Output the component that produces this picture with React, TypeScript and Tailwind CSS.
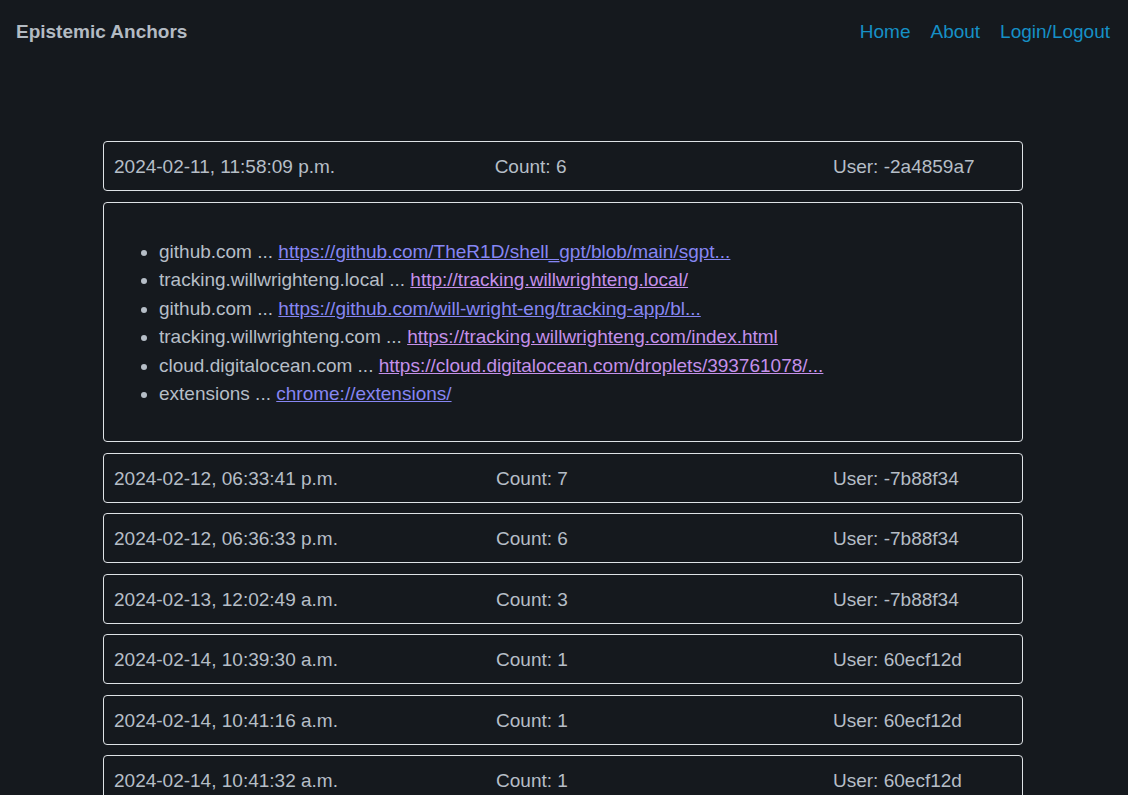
type Entry = {
  date: string;
  count: number;
  user: string;
};

type Link = {
  host: string;
  url: string;
  visited: boolean;
};

const entries: Entry[] = [
  { date: "2024-02-11, 11:58:09 p.m.", count: 6, user: "-2a4859a7" },
  { date: "2024-02-12, 06:33:41 p.m.", count: 7, user: "-7b88f34" },
  { date: "2024-02-12, 06:36:33 p.m.", count: 6, user: "-7b88f34" },
  { date: "2024-02-13, 12:02:49 a.m.", count: 3, user: "-7b88f34" },
  { date: "2024-02-14, 10:39:30 a.m.", count: 1, user: "60ecf12d" },
  { date: "2024-02-14, 10:41:16 a.m.", count: 1, user: "60ecf12d" },
  { date: "2024-02-14, 10:41:32 a.m.", count: 1, user: "60ecf12d" },
];

const links: Link[] = [
  { host: "github.com", url: "https://github.com/TheR1D/shell_gpt/blob/main/sgpt...", visited: false },
  { host: "tracking.willwrighteng.local", url: "http://tracking.willwrighteng.local/", visited: true },
  { host: "github.com", url: "https://github.com/will-wright-eng/tracking-app/bl...", visited: false },
  { host: "tracking.willwrighteng.com", url: "https://tracking.willwrighteng.com/index.html", visited: true },
  { host: "cloud.digitalocean.com", url: "https://cloud.digitalocean.com/droplets/393761078/...", visited: true },
  { host: "extensions", url: "chrome://extensions/", visited: false },
];

function Row({ entry }: { entry: Entry }) {
  return (
    <div className="flex items-center h-[50px] border border-[#dee2e6] rounded-[4px] px-[10px] pt-[3px]">
      <span>{entry.date}</span>
      <div className="flex-1 flex justify-center">
        <span>Count: {entry.count}</span>
      </div>
      <span className="w-[179px] ml-[107px]">User: {entry.user}</span>
    </div>
  );
}

function Details() {
  return (
    <div className="h-[240.5px] border border-[#dee2e6] rounded-[4px] px-[11px] pt-[35px]">
      <ul className="list-disc pl-[44px]">
        {links.map((l, i) => (
          <li key={i}>
            {l.host} ...{" "}
            <a
              href="#"
              className={`underline ${l.visited ? "text-[#c490ea]" : "text-[#8686f3]"}`}
            >
              {l.url}
            </a>
          </li>
        ))}
      </ul>
    </div>
  );
}

export default function App() {
  return (
    <div
      className="min-h-[795px] bg-[#15191e] text-[#b6bec7] text-[19px] leading-[28.5px]"
      style={{ fontFamily: '"Liberation Sans", Arial, sans-serif' }}
    >
      <nav className="flex items-center justify-between h-[62px] pt-[2px] pl-4 pr-[18px]">
        <span className="font-bold text-[#b3bbc3]">Epistemic Anchors</span>
        <div className="flex gap-[20px] text-[#1690c6]">
          <a href="#">Home</a>
          <a href="#">About</a>
          <a href="#">Login/Logout</a>
        </div>
      </nav>
      <main className="w-[920px] ml-[103px] mt-[79px] flex flex-col gap-[10.5px] pb-4">
        <Row entry={entries[0]} />
        <Details />
        {entries.slice(1).map((e, i) => (
          <Row key={i} entry={e} />
        ))}
      </main>
    </div>
  );
}
